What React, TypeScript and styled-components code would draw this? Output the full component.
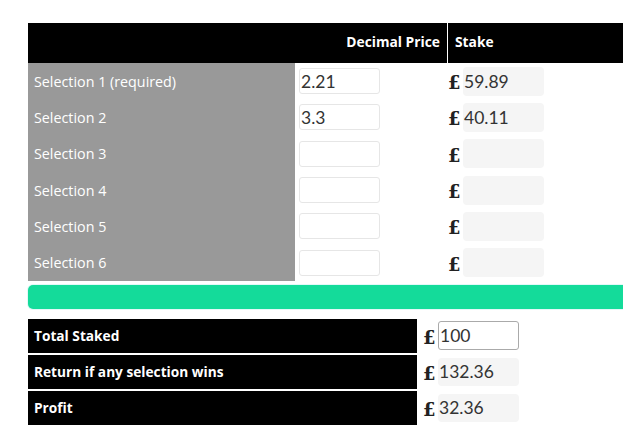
import React from 'react';
import styled, { createGlobalStyle } from 'styled-components';

const GlobalStyle = createGlobalStyle`
  html, body { margin: 0; padding: 0; background: #fff; overflow: hidden; }
  body { font-family: "Open Sans", "Noto Sans", "Liberation Sans", sans-serif; }
`;

const selections = [
  { label: 'Selection 1 (required)', price: '2.21', stake: '59.89' },
  { label: 'Selection 2', price: '3.3', stake: '40.11' },
  { label: 'Selection 3', price: '', stake: '' },
  { label: 'Selection 4', price: '', stake: '' },
  { label: 'Selection 5', price: '', stake: '' },
  { label: 'Selection 6', price: '', stake: '' },
];

const totals = [
  { label: 'Total Staked', value: '100', editable: true },
  { label: 'Return if any selection wins', value: '132.36', editable: false },
  { label: 'Profit', value: '32.36', editable: false },
];

const Calculator = () => (
  <Page>
    <GlobalStyle />
    <Table>
      <HeadBlank />
      <HeadCell $align="right">Decimal Price</HeadCell>
      <HeadCell $divider>Stake</HeadCell>
      {selections.map((s) => (
        <React.Fragment key={s.label}>
          <LabelCell>{s.label}</LabelCell>
          <PriceCell>
            <PriceInput defaultValue={s.price} />
          </PriceCell>
          <StakeCell>
            <Pound>£</Pound>
            <ReadOnlyBox>{s.stake}</ReadOnlyBox>
          </StakeCell>
        </React.Fragment>
      ))}
    </Table>
    <CalcButton />
    <Totals>
      {totals.map((t) => (
        <React.Fragment key={t.label}>
          <TotalLabel>{t.label}</TotalLabel>
          <TotalValue>
            <Pound>£</Pound>
            {t.editable ? <TotalInput defaultValue={t.value} /> : <ReadOnlyBox $total>{t.value}</ReadOnlyBox>}
          </TotalValue>
        </React.Fragment>
      ))}
    </Totals>
  </Page>
);

const Page = styled.div`
  padding: 23px 0 0 28px;
  width: 620px;
`;

const Table = styled.div`
  display: grid;
  grid-template-columns: 267px 152px 1fr;
  grid-template-rows: 40px repeat(6, 36.33px);
`;

const HeadBlank = styled.div` background: #000; `;

const HeadCell = styled.div<{ $align?: string; $divider?: boolean }>`
  background: #000;
  color: #fff;
  font-weight: bold;
  font-size: 13.8px;
  display: flex;
  align-items: center;
  justify-content: ${(p) => (p.$align === 'right' ? 'flex-end' : 'flex-start')};
  padding: ${(p) => (p.$align === 'right' ? '0 7px 0 0' : '0 0 0 7px')};
  border-left: ${(p) => (p.$divider ? '1px solid #fff' : 'none')};
  padding-bottom: 3px;
`;

const LabelCell = styled.div`
  background: #999;
  color: #fff;
  font-size: 14.3px;
  display: flex;
  align-items: center;
  padding-left: 6px;
`;

const PriceCell = styled.div`
  display: flex;
  align-items: center;
  padding-left: 4px;
`;

const PriceInput = styled.input`
  box-sizing: border-box;
  width: 81px;
  height: 26px;
  border: 1px solid #e6e6e6;
  border-radius: 3px;
  padding: 0 1px;
  font-family: Lato, "Open Sans", sans-serif;
  font-size: 17.5px;
  color: #333;
  outline: none;
`;

const StakeCell = styled.div`
  display: flex;
  align-items: center;
  padding-left: 1px;
`;

const Pound = styled.span`
  font-family: "DejaVu Serif", serif;
  font-weight: bold;
  font-size: 18px;
  color: #222;
  width: 15px;
  line-height: 1;
  margin-top: 4px;
`;

const ReadOnlyBox = styled.div<{ $total?: boolean }>`
  box-sizing: border-box;
  width: 81px;
  height: ${(p) => (p.$total ? '28px' : '29px')};
  background: #f5f5f5;
  border-radius: 4px;
  padding-left: 1px;
  font-family: Lato, "Open Sans", sans-serif;
  font-size: 17.5px;
  color: #333;
  display: flex;
  align-items: center;
`;

const CalcButton = styled.div`
  margin-top: 4px;
  height: 24px;
  background: #14db9a;
  border-radius: 5px;
  box-shadow: 0 0 0 1px #e3f8f8;
`;

const Totals = styled.div`
  display: grid;
  grid-template-columns: 389px 1fr;
  grid-auto-rows: 34px;
  row-gap: 2px;
  margin-top: 10px;
`;

const TotalLabel = styled.div`
  background: #000;
  color: #fff;
  font-weight: bold;
  font-size: 13.7px;
  display: flex;
  align-items: center;
  padding-left: 6px;
`;

const TotalValue = styled.div`
  display: flex;
  align-items: center;
  padding-left: 6px;
`;

const TotalInput = styled.input`
  box-sizing: border-box;
  width: 81px;
  height: 29px;
  border: 1px solid #aaa;
  border-radius: 3px;
  padding: 0 1px;
  font-family: Lato, "Open Sans", sans-serif;
  font-size: 17.5px;
  color: #333;
  outline: none;
`;

export default Calculator;
